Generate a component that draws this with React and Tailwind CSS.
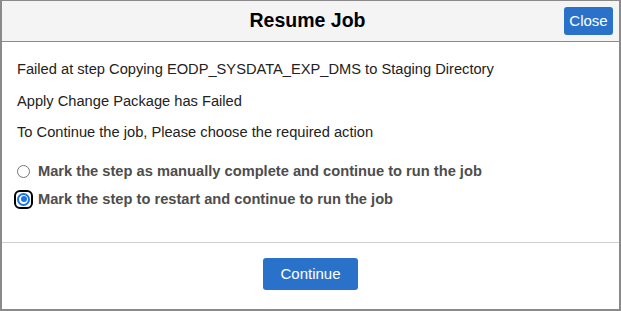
export default function App() {
  return (
    <div className="flex h-[311px] w-[621px] flex-col border-b-2 border-l-2 border-r-2 border-t border-[#8a8a8a] bg-white font-['Liberation_Sans',Arial,sans-serif]">
      {/* Header */}
      <div className="grid h-[41px] shrink-0 grid-cols-[1fr_auto_1fr] items-center border-b border-[#8a8a8a] bg-[#f4f4f4] pr-[6px]">
        <div />
        <h1 className="text-[19.5px] font-bold text-black">Resume Job</h1>
        <div className="flex justify-end">
          <button className="h-[28px] w-[49px] rounded-[3px] bg-[#2a72c9] text-[15px] text-white">
            Close
          </button>
        </div>
      </div>

      {/* Body */}
      <div className="flex flex-1 flex-col pl-[15px] pt-[19px] text-[14.667px] leading-[16px] text-[#222]">
        <p>Failed at step Copying EODP_SYSDATA_EXP_DMS to Staging Directory</p>
        <p className="mt-[16px]">Apply Change Package has Failed</p>
        <p className="mt-[15px]">To Continue the job, Please choose the required action</p>

        <div className="mt-[21px] flex flex-col gap-[8px] font-bold text-[#4d4d4d]">
          <label className="flex h-[20px] items-center gap-[5px]">
            <span className="-ml-[3px] flex h-[19px] w-[19px] items-center justify-center">
              <span className="h-[13px] w-[13px] rounded-full border border-[#767676] bg-white" />
            </span>
            Mark the step as manually complete and continue to run the job
          </label>
          <label className="flex h-[20px] items-center gap-[5px]">
            <span className="-ml-[3px] flex h-[19px] w-[19px] items-center justify-center rounded-[6px] border-2 border-black">
              <span className="flex h-[13px] w-[13px] items-center justify-center rounded-full border-2 border-[#1a73e8] bg-white">
                <span className="h-[6px] w-[6px] rounded-full bg-[#1a73e8]" />
              </span>
            </span>
            Mark the step to restart and continue to run the job
          </label>
        </div>
      </div>

      {/* Footer */}
      <div className="flex h-[67px] shrink-0 justify-center border-t border-[#d0d0d0] pt-[15px]">
        <button className="h-[32px] w-[95px] rounded-[3px] bg-[#2a72c9] text-[15px] text-white">
          Continue
        </button>
      </div>
    </div>
  )
}
